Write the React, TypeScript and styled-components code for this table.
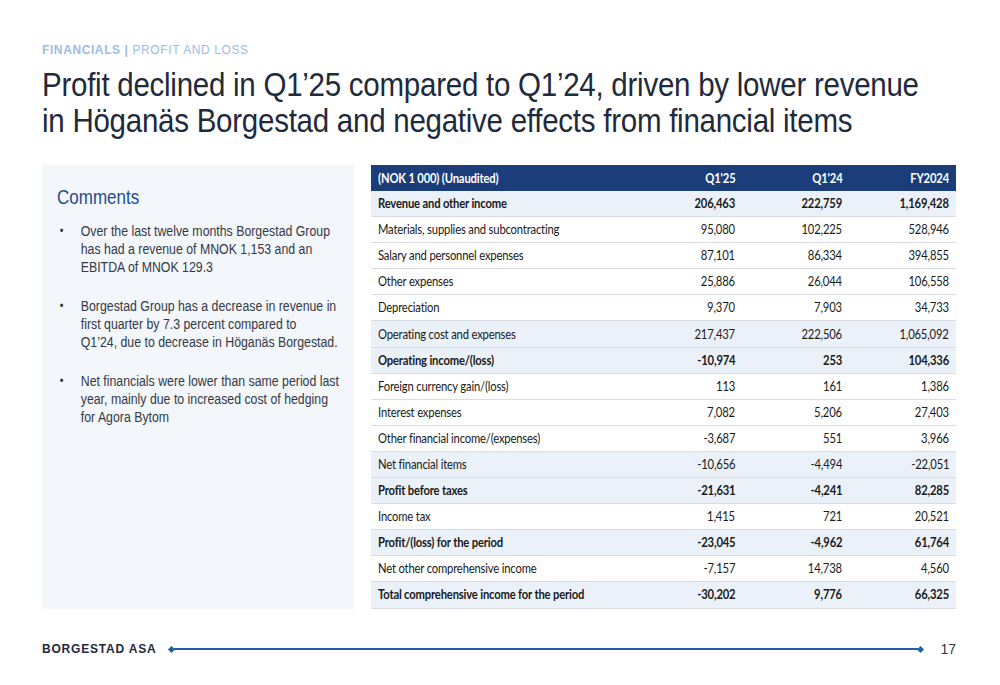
import React from "react";
import styled, { createGlobalStyle } from "styled-components";

type Row = { label: string; q125: string; q124: string; fy: string; bold?: boolean; shaded?: boolean };

const rows: Row[] = [
  { label: "Revenue and other income", q125: "206,463", q124: "222,759", fy: "1,169,428", bold: true, shaded: true },
  { label: "Materials, supplies and subcontracting", q125: "95,080", q124: "102,225", fy: "528,946" },
  { label: "Salary and personnel expenses", q125: "87,101", q124: "86,334", fy: "394,855" },
  { label: "Other expenses", q125: "25,886", q124: "26,044", fy: "106,558" },
  { label: "Depreciation", q125: "9,370", q124: "7,903", fy: "34,733" },
  { label: "Operating cost and expenses", q125: "217,437", q124: "222,506", fy: "1,065,092", shaded: true },
  { label: "Operating income/(loss)", q125: "-10,974", q124: "253", fy: "104,336", bold: true, shaded: true },
  { label: "Foreign currency gain/(loss)", q125: "113", q124: "161", fy: "1,386" },
  { label: "Interest expenses", q125: "7,082", q124: "5,206", fy: "27,403" },
  { label: "Other financial income/(expenses)", q125: "-3,687", q124: "551", fy: "3,966" },
  { label: "Net financial items", q125: "-10,656", q124: "-4,494", fy: "-22,051", shaded: true },
  { label: "Profit before taxes", q125: "-21,631", q124: "-4,241", fy: "82,285", bold: true, shaded: true },
  { label: "Income tax", q125: "1,415", q124: "721", fy: "20,521" },
  { label: "Profit/(loss) for the period", q125: "-23,045", q124: "-4,962", fy: "61,764", bold: true, shaded: true },
  { label: "Net other comprehensive income", q125: "-7,157", q124: "14,738", fy: "4,560" },
  { label: "Total comprehensive income for the period", q125: "-30,202", q124: "9,776", fy: "66,325", bold: true, shaded: true },
];

const comments = [
  "Over the last twelve months Borgestad Group has had a revenue of MNOK 1,153 and an EBITDA of MNOK 129.3",
  "Borgestad Group has a decrease in revenue in first quarter by 7.3 percent compared to\nQ1’24, due to decrease in Höganäs Borgestad.",
  "Net financials were lower than same period last year, mainly due to increased cost of hedging for Agora Bytom",
];

const App: React.FC = () => {
  return (
    <Slide>
      <GlobalStyle />
      <Kicker>
        <strong>FINANCIALS |</strong> PROFIT AND LOSS
      </Kicker>
      <Title>
        Profit declined in Q1’25 compared to Q1’24, driven by lower revenue
        <br />
        in Höganäs Borgestad and negative effects from financial items
      </Title>
      <Body>
        <CommentPanel>
          <PanelTitle>Comments</PanelTitle>
          <BulletList>
            {comments.map((c) => (
              <Bullet key={c}>{c}</Bullet>
            ))}
          </BulletList>
        </CommentPanel>
        <Table>
          <thead>
            <tr>
              <HeadCell>
                <CellText>(NOK 1 000) (Unaudited)</CellText>
              </HeadCell>
              <HeadCell $num>
                <CellText $num>Q1'25</CellText>
              </HeadCell>
              <HeadCell $num>
                <CellText $num>Q1'24</CellText>
              </HeadCell>
              <HeadCell $num>
                <CellText $num>FY2024</CellText>
              </HeadCell>
            </tr>
          </thead>
          <tbody>
            {rows.map((r) => (
              <BodyRow key={r.label} $bold={r.bold} $shaded={r.shaded}>
                <Cell>
                  <CellText>{r.label}</CellText>
                </Cell>
                <Cell $num>
                  <CellText $num>{r.q125}</CellText>
                </Cell>
                <Cell $num>
                  <CellText $num>{r.q124}</CellText>
                </Cell>
                <Cell $num>
                  <CellText $num>{r.fy}</CellText>
                </Cell>
              </BodyRow>
            ))}
          </tbody>
        </Table>
      </Body>
      <Footer>
        <Brand>BORGESTAD ASA</Brand>
        <Rule>
          <Diamond />
          <Line />
          <Diamond />
        </Rule>
        <PageNo>17</PageNo>
      </Footer>
    </Slide>
  );
};

// CSS
const GlobalStyle = createGlobalStyle`
  html, body {
    margin: 0;
    padding: 0;
    background: #ffffff;
  }
  body {
    font-family: "Liberation Sans", Arial, sans-serif;
  }
`;

const Slide = styled.div`
  width: 1000px;
  height: 685px;
  box-sizing: border-box;
  padding: 43px 44px 0 42px;
  display: flex;
  flex-direction: column;
  overflow: hidden;
`;

const Kicker = styled.div`
  font-size: 12px;
  letter-spacing: 0.6px;
  color: #9dbce6;
  line-height: 15px;

  strong {
    font-weight: 700;
  }
`;

// the deck's title face is a narrow grotesk, so Arial metrics are squeezed
const Title = styled.h1`
  margin: 9px 0 0;
  font-size: 33px;
  font-weight: 400;
  line-height: 36px;
  color: #1f2a3c;
  letter-spacing: -0.3px;
  white-space: nowrap;
  transform: scaleX(0.895);
  transform-origin: left top;
`;

const Body = styled.div`
  margin-top: 26px;
  display: flex;
  gap: 17px;
  align-items: flex-start;
`;

const CommentPanel = styled.div`
  width: 312px;
  height: 444px;
  box-sizing: border-box;
  background: #f3f6fb;
  padding: 20px 0 0 15px;
  flex-shrink: 0;
`;

const PanelTitle = styled.div`
  font-size: 20px;
  color: #1f4e8c;
  line-height: 24px;
  transform: scaleX(0.85);
  transform-origin: left top;
`;

const BulletList = styled.ul`
  margin: 13px 0 0;
  padding: 0 0 0 27px;
  width: 296px;
  list-style: none;
  transform: scaleX(0.88);
  transform-origin: left top;
`;

const Bullet = styled.li`
  position: relative;
  font-size: 14px;
  line-height: 18px;
  color: #333a45;
  margin-bottom: 21px;
  white-space: pre-line;

  &::before {
    content: "•";
    position: absolute;
    left: -24px;
    top: 0;
    font-size: 12px;
  }
`;

const Table = styled.table`
  width: 585px;
  border-collapse: collapse;
  font-family: Lato, "Open Sans", sans-serif;
  font-size: 12.5px;
  letter-spacing: -0.2px;
  color: #1a1a1a;
`;

const CellText = styled.span<{ $num?: boolean }>`
  display: inline-block;
  transform: scaleX(0.9);
  transform-origin: ${(p) => (p.$num ? "right center" : "left center")};
`;

const HeadCell = styled.th<{ $num?: boolean }>`
  background: #1b3e7a;
  color: #ffffff;
  font-weight: 700;
  height: 26px;
  padding: 0 7px;
  text-align: ${(p) => (p.$num ? "right" : "left")};
  width: ${(p) => (p.$num ? "93px" : "auto")};
`;

const BodyRow = styled.tr<{ $bold?: boolean; $shaded?: boolean }>`
  background: ${(p) => (p.$shaded ? "#ebf1f9" : "#ffffff")};
  font-weight: ${(p) => (p.$bold ? 700 : 400)};
  border-bottom: 1px solid #d9dde3;
`;

const Cell = styled.td<{ $num?: boolean }>`
  height: 25.1px;
  padding: 0 7px;
  text-align: ${(p) => (p.$num ? "right" : "left")};
  white-space: nowrap;
`;

const Footer = styled.div`
  margin-top: 30px;
  display: flex;
  align-items: center;
  height: 20px;
`;

const Brand = styled.div`
  font-size: 12px;
  font-weight: 700;
  letter-spacing: 0.8px;
  color: #1f2a3c;
`;

const Rule = styled.div`
  flex: 1;
  display: flex;
  align-items: center;
  margin: 0 17px 0 13px;
`;

const Diamond = styled.span`
  width: 5px;
  height: 5px;
  background: #1f5fa8;
  transform: rotate(45deg);
  flex-shrink: 0;
`;

const Line = styled.span`
  flex: 1;
  height: 2px;
  background: #1f5fa8;
`;

const PageNo = styled.div`
  font-size: 14px;
  color: #333a45;
`;

export default App;
